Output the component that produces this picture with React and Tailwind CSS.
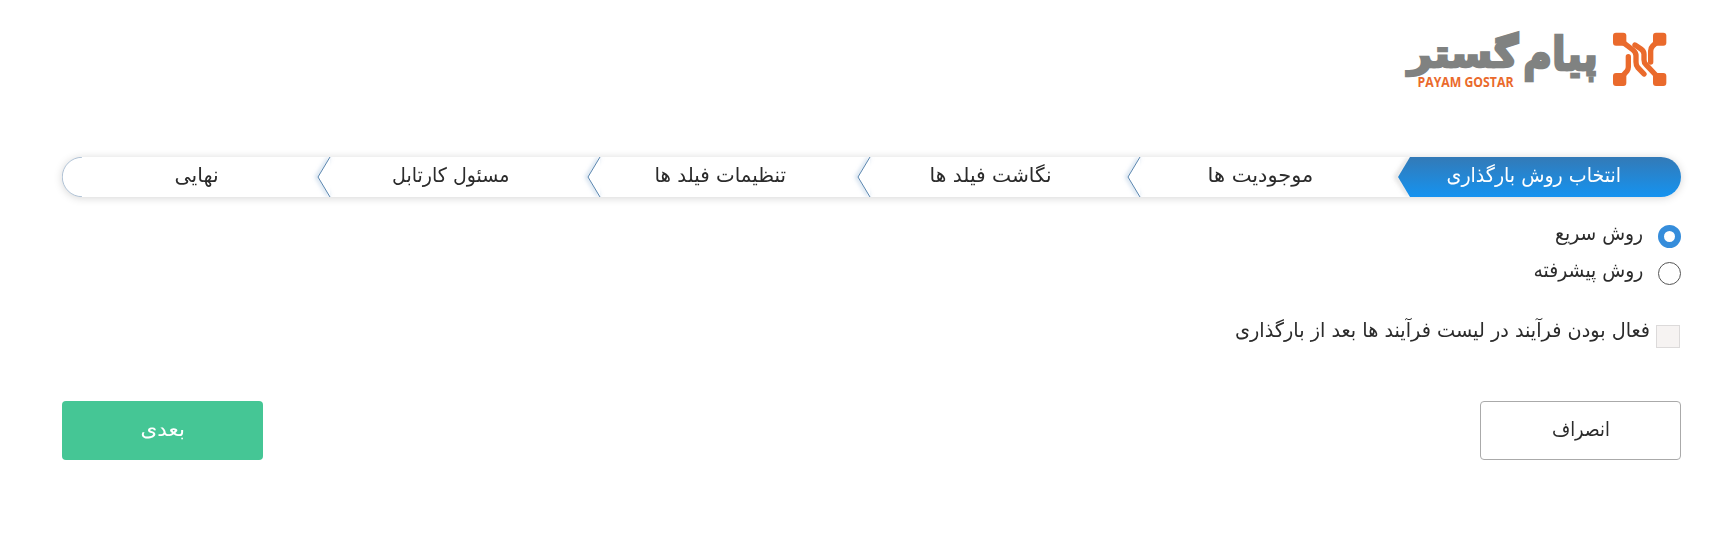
import { useLayoutEffect, useRef, useState } from "react";

function Fit({ width, className = "", children }) {
  const ref = useRef(null);
  const [scale, setScale] = useState(1);
  useLayoutEffect(() => {
    setScale(width / ref.current.offsetWidth);
  }, [width]);
  return (
    <span className={"flex shrink-0 justify-center " + className} style={{ width }}>
      <span ref={ref} className="inline-block shrink-0 whitespace-nowrap" style={{ transform: `scaleX(${scale})` }}>
        {children}
      </span>
    </span>
  );
}

const steps = [
  { label: "موجودیت ها", width: 106, pad: "pr-[30px]" },
  { label: "نگاشت فیلد ها", width: 122, pad: "pr-[30px]" },
  { label: "تنظیمات فیلد ها", width: 132, pad: "pr-8" },
  { label: "مسئول کارتابل", width: 117, pad: "pr-8" },
  { label: "نهایی", width: 44, pad: "pr-0" },
];

function Logo() {
  return (
    <svg className="block h-[70px] w-[275px]" viewBox="1400 25 275 70">
      <g fontFamily="'DejaVu Sans', sans-serif" fontWeight="700" fill="#808281" stroke="#808281" strokeWidth="2.4" direction="rtl">
        <text x="1598" y="70" fontSize="46" textLength="75" lengthAdjust="spacingAndGlyphs">پیام</text>
        <text x="1518" y="67" fontSize="38" textLength="110" lengthAdjust="spacingAndGlyphs">گستر</text>
      </g>
      <text x="1417.5" y="87" direction="ltr" textAnchor="start" fontSize="13.5" fontWeight="700" fontFamily="'Open Sans', sans-serif" fill="#ea6a2c" textLength="96" lengthAdjust="spacingAndGlyphs">PAYAM GOSTAR</text>
      <g transform="translate(1605 25) scale(.33333)">
        <g fill="#ea6a2c">
          <rect x="24" y="23" width="40" height="39" rx="9" />
          <rect x="144" y="23" width="40" height="39" rx="9" />
          <rect x="24" y="144" width="40" height="39" rx="9" />
          <rect x="144" y="144" width="40" height="39" rx="9" />
        </g>
        <g fill="none" stroke="#ea6a2c" strokeWidth="16" strokeLinejoin="round" strokeLinecap="round">
          <path d="M54 52L84 75Q93 82 93 92V111Q93 121 98 127L117 147" />
          <path d="M90 60L108 72Q117 78 117 88V104Q117 113 123 119L155 153" />
          <path d="M70 95V126Q70 133 66 138L52 154" />
          <path d="M155 52L143 63Q137 69 137 78V111" />
        </g>
      </g>
    </svg>
  );
}

export default function App() {
  return (
    <main dir="rtl" className="h-[545px] w-full overflow-hidden bg-white pr-[51px] pl-[62px] pt-[25px] font-['DejaVu_Sans',sans-serif] text-[20px] leading-6 text-[#2b2b2b]">
      <header className="flex h-[132px] pr-[6px]">
        <Logo />
      </header>
      <nav className="relative flex h-10 rounded-full bg-white shadow-[0_1px_9px_rgba(0,0,0,0.17)]">
        <svg className="absolute inset-0 h-10 w-full" viewBox="0 0 1619 40" preserveAspectRatio="none">
          <defs>
            <linearGradient id="active" x1="0" y1="0" x2="0" y2="1">
              <stop offset="0" stopColor="#337ab7" />
              <stop offset="1" stopColor="#1593f0" />
            </linearGradient>
            <filter id="soft" x="-100%" y="-20%" width="300%" height="140%">
              <feGaussianBlur stdDeviation="2" />
            </filter>
          </defs>
          <path d="M20 .3A19.7 19.7 0 0 0 20 39.7" fill="none" stroke="#8fa9c4" strokeWidth=".7" />
          {[268, 538, 808, 1078].map((x) => (
            <g key={x} fill="none" transform={`translate(${x} 0)`}>
              <path d="M-1 1L-13 20L-1 39" stroke="#9dbbd8" strokeOpacity=".6" strokeWidth="3" filter="url(#soft)" />
              <path d="M0 0L-12 20L0 40Z" fill="#fff" />
              <path d="M0 0L-12 20L0 40" stroke="#5c87b0" />
            </g>
          ))}
          <path d="M1347 1L1334 20L1347 39" fill="none" stroke="#999" strokeOpacity=".4" strokeWidth="3" filter="url(#soft)" />
          <path d="M1348 0H1599A20 20 0 0 1 1599 40H1348L1336 20Z" fill="url(#active)" />
        </svg>
        <div className="relative flex h-9 w-[271px] items-center justify-center pr-[23px] text-white">
          <Fit width={175}>انتخاب روش بارگذاری</Fit>
        </div>
        {steps.map((step) => (
          <div key={step.label} className={"relative flex h-9 w-[270px] items-center justify-center " + step.pad}>
            <Fit width={step.width}>{step.label}</Fit>
          </div>
        ))}
      </nav>
      <section className="pt-7">
        <label className="flex h-[37px] items-start">
          <span className="h-[23px] w-[23px] shrink-0 rounded-full border-6 border-[#368ddb] bg-white" />
          <Fit width={88} className="mr-[15px] -mt-[4px]">روش سریع</Fit>
        </label>
        <label className="flex h-[37px] items-start">
          <span className="h-[23px] w-[23px] shrink-0 rounded-full border border-[#555] bg-white" />
          <Fit width={110} className="mr-[15px] -mt-[4px]">روش پیشرفته</Fit>
        </label>
        <label className="mt-[26px] flex h-6 items-start pr-px">
          <span className="h-[23px] w-6 shrink-0 border border-[#dcdada] bg-[#f6f3f2]" />
          <Fit width={415} className="mr-[6px] -mt-[7px]">فعال بودن فرآیند در لیست فرآیند ها بعد از بارگذاری</Fit>
        </label>
      </section>
      <footer className="mt-[52px] flex justify-between">
        <button className="flex h-[59px] w-[201px] items-center justify-center rounded border border-[#aaa] pb-1">
          <Fit width={58}>انصراف</Fit>
        </button>
        <button className="flex h-[59px] w-[201px] items-center justify-center rounded bg-[#45c695] pb-1 text-white">
          <Fit width={44}>بعدی</Fit>
        </button>
      </footer>
    </main>
  );
}
